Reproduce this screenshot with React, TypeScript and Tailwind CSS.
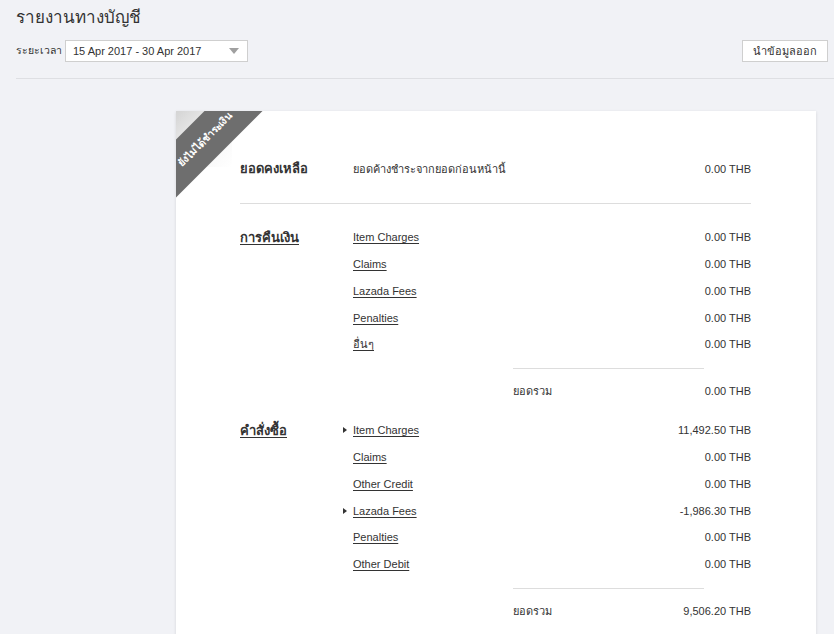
const refunds = ['Item Charges', 'Claims', 'Lazada Fees', 'Penalties', 'อื่นๆ'];

const orders = [
  { label: 'Item Charges', value: '11,492.50 THB', expand: true },
  { label: 'Claims', value: '0.00 THB' },
  { label: 'Other Credit', value: '0.00 THB' },
  { label: 'Lazada Fees', value: '-1,986.30 THB', expand: true },
  { label: 'Penalties', value: '0.00 THB' },
  { label: 'Other Debit', value: '0.00 THB' },
];

type Row = { label: string; value: string; expand?: boolean };

const Section = ({ title, rows, total }: { title: string; rows: Row[]; total: string }) => (
  <div className="flex">
    <div className="w-[113px] shrink-0 h-[27px] flex items-center">
      <span className="text-[13px] font-bold underline underline-offset-2">{title}</span>
    </div>
    <div className="flex-1">
      {rows.map((r, i) => (
        <div key={i} className="h-[26.8px] flex items-center justify-between">
          <span className="relative underline underline-offset-2 cursor-pointer">
            {r.expand && (
              <span className="absolute -left-[10px] top-1/2 -translate-y-1/2 w-0 h-0 border-y-[3.5px] border-y-transparent border-l-[4px] border-l-[#333]" />
            )}
            {r.label}
          </span>
          <span>{r.value}</span>
        </div>
      ))}
      <div className="ml-[160px] w-[191px] h-px bg-[#dddddd] mt-[10px]" />
      <div className="h-[27px] mt-[9px] flex items-center justify-between pl-[160px]">
        <span>ยอดรวม</span>
        <span>{total}</span>
      </div>
    </div>
  </div>
);

export default function App() {
  return (
    <div className="min-h-screen bg-[#f1f2f6] text-[#333] text-[11px] font-['Liberation_Sans',Tahoma,sans-serif]">
      {/* header */}
      <div className="pl-4">
        <h1 className="text-[17px] pt-[5px] leading-[25px] text-[#333]">รายงานทางบัญชี</h1>
        <div className="flex items-center mt-[10px] pr-[6px]">
          <span className="w-[49px] shrink-0 whitespace-nowrap text-[10.5px]">ระยะเวลา</span>
          <div className="w-[183px] h-[22px] bg-white border border-[#cfcfcf] flex items-center justify-between pl-[7px] pr-[8px] text-[11px]">
            <span>15 Apr 2017 - 30 Apr 2017</span>
            <span className="w-0 h-0 border-x-[5px] border-x-transparent border-t-[6px] border-t-[#a0a0a0]" />
          </div>
          <button className="ml-auto w-[86px] h-[22px] bg-white border border-[#cfcfcf] text-[11px] text-[#333]">
            นำข้อมูลออก
          </button>
        </div>
        <div className="h-px bg-[#dedfe3] mt-[16px]" />
      </div>

      {/* report card */}
      <div className="pl-[176px] pr-[18px] pt-[32px]">
        <div className="relative overflow-hidden bg-white shadow-[0_1px_3px_rgba(0,0,0,0.12)] pl-[64px] pr-[65px] pt-[48px] pb-[40px]">
          <div className="absolute top-0 left-0 w-[56px] h-[56px] bg-gradient-to-br from-[#d4d4d4] via-[#f4f4f4] to-white" />
          <div className="absolute left-[-51px] top-[8px] w-[160px] h-[41px] -rotate-45 bg-[#6e6e6e] flex items-center justify-center">
            <span className="text-white font-bold text-[10px] whitespace-nowrap">ยังไม่ได้ชำระเงิน</span>
          </div>

          <div className="flex items-center h-[20px]">
            <span className="w-[113px] text-[13px] font-bold">ยอดคงเหลือ</span>
            <span className="flex-1">ยอดค้างชำระจากยอดก่อนหน้านี้</span>
            <span>0.00 THB</span>
          </div>
          <div className="h-px bg-[#dddddd] mt-[24px] mb-[20px]" />

          <Section
            title="การคืนเงิน"
            rows={refunds.map((l) => ({ label: l, value: '0.00 THB' }))}
            total="0.00 THB"
          />
          <div className="h-[12px]" />
          <Section title="คำสั่งซื้อ" rows={orders} total="9,506.20 THB" />
        </div>
      </div>
    </div>
  );
}
